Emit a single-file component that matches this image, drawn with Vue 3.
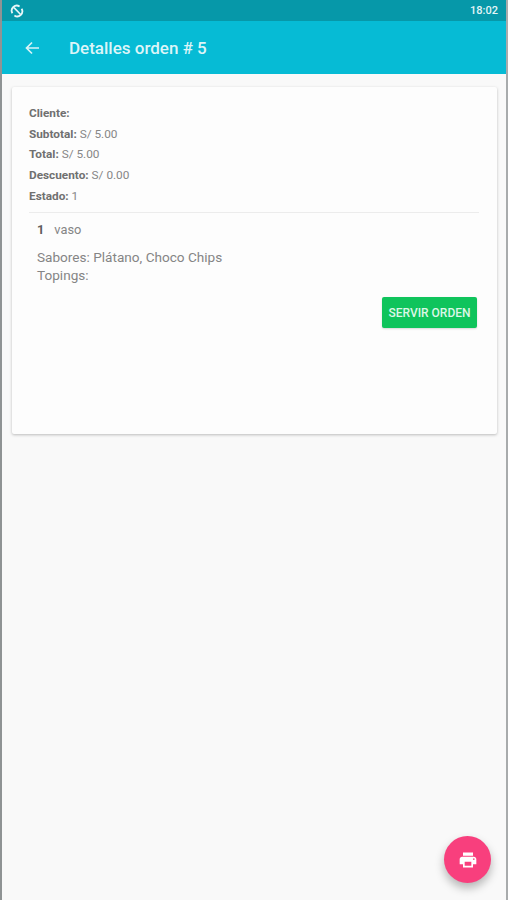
<template>
  <div class="screen">
    <div class="status-bar">
      <svg class="sync-icon" width="14" height="14" viewBox="0 0 14 14" fill="none" stroke="#e8f6f8" stroke-width="1.8">
        <path d="M2.4 9.2A5 5 0 0 1 9.6 2.6" />
        <path d="M11.6 4.8A5 5 0 0 1 4.4 11.4" />
        <path d="M4 3.6l6.4 6.6" stroke-width="1.6" />
      </svg>
      <span class="time">18:02</span>
    </div>

    <header class="toolbar">
      <svg class="back-icon" width="14" height="14" viewBox="0 0 14 14" fill="none" stroke="#d8f3f7" stroke-width="1.7">
        <path d="M14 7H1.5M7 1.5L1.5 7 7 12.5" />
      </svg>
      <h1 class="title">Detalles orden # 5</h1>
    </header>

    <main class="content">
      <section class="card">
        <div class="info">
          <p v-for="row in infoRows" :key="row.label" class="info-row">
            <strong>{{ row.label }}:</strong> {{ row.value }}
          </p>
        </div>

        <div class="item">
          <div class="item-head">
            <strong>1</strong>
            <span>vaso</span>
          </div>
          <p class="item-detail">Sabores: Plátano, Choco Chips</p>
          <p class="item-detail">Topings:</p>
        </div>

        <div class="actions">
          <button class="btn-serve">SERVIR ORDEN</button>
        </div>
      </section>
    </main>

    <button class="fab" aria-label="Imprimir">
      <svg width="20" height="20" viewBox="0 0 24 24" fill="#fff">
        <path d="M19 8H5c-1.66 0-3 1.34-3 3v6h4v4h12v-4h4v-6c0-1.66-1.34-3-3-3zm-3 11H8v-5h8v5zm3-7c-.55 0-1-.45-1-1s.45-1 1-1 1 .45 1 1-.45 1-1 1zm-1-9H6v4h12V3z" />
      </svg>
    </button>
  </div>
</template>

<script setup>
const infoRows = [
  { label: 'Cliente', value: '' },
  { label: 'Subtotal', value: 'S/ 5.00' },
  { label: 'Total', value: 'S/ 5.00' },
  { label: 'Descuento', value: 'S/ 0.00' },
  { label: 'Estado', value: '1' },
]
</script>

<style>
html,
body {
  margin: 0;
}
</style>

<style scoped>
.screen {
  position: relative;
  box-sizing: border-box;
  width: 508px;
  height: 900px;
  overflow: hidden;
  display: flex;
  flex-direction: column;
  background: #f9f9f9;
  border-left: 2px solid #8f9394;
  border-right: 2px solid #a8abac;
  font-family: Roboto, "Liberation Sans", sans-serif;
  color: #757575;
}

.status-bar {
  height: 21px;
  flex-shrink: 0;
  display: flex;
  align-items: center;
  justify-content: space-between;
  padding: 0 8px 0 8px;
  background: #0698a9;
  color: #e3f5f7;
  font-size: 11px;
  font-weight: 500;
}

.toolbar {
  height: 53px;
  flex-shrink: 0;
  display: flex;
  align-items: center;
  padding: 0 0 0 23px;
  background: #06bbd5;
  box-sizing: border-box;
}

.back-icon {
  margin-right: 30px;
}

.title {
  margin: 0;
  font-size: 17px;
  font-weight: 500;
  color: #dcf5f8;
}

.content {
  flex: 1;
  padding: 13px 9px 0 10px;
}

.card {
  box-sizing: border-box;
  height: 347px;
  padding: 16px 18px 0 17px;
  background: #fdfdfd;
  border-radius: 2px;
  box-shadow: 0 1px 3px rgba(0, 0, 0, 0.25);
}

.info {
  border-bottom: 1px solid #ececec;
  padding-bottom: 5.5px;
}

.info-row {
  margin: 0;
  height: 20.7px;
  line-height: 20px;
  font-size: 11.8px;
  color: #868686;
}

.info-row strong {
  font-weight: 700;
  color: #707070;
}

.item {
  padding: 8px 0 0 8px;
}

.item-head {
  display: flex;
  gap: 10px;
  font-size: 12.8px;
  line-height: 18px;
  margin-bottom: 9px;
}

.item-head span {
  color: #858585;
}

.item-head strong {
  color: #5f5f5f;
}

.item-detail {
  margin: 0;
  font-size: 13.6px;
  line-height: 18px;
  color: #858585;
}

.actions {
  display: flex;
  justify-content: flex-end;
  padding: 13px 2px 0 0;
}

.btn-serve {
  width: 95px;
  height: 31px;
  padding: 1px 0 0;
  border: none;
  border-radius: 2px;
  background: #0fc45c;
  color: #dcf7e7;
  font-family: inherit;
  font-size: 12px;
  font-weight: 500;
  box-shadow: 0 1px 2px rgba(0, 0, 0, 0.15);
}

.fab {
  position: absolute;
  right: 15px;
  bottom: 17px;
  width: 47px;
  height: 47px;
  padding: 0;
  display: flex;
  align-items: center;
  justify-content: center;
  border: none;
  border-radius: 50%;
  background: #f83f7d;
  box-shadow: 0 5px 10px rgba(0, 0, 0, 0.28);
}
</style>
